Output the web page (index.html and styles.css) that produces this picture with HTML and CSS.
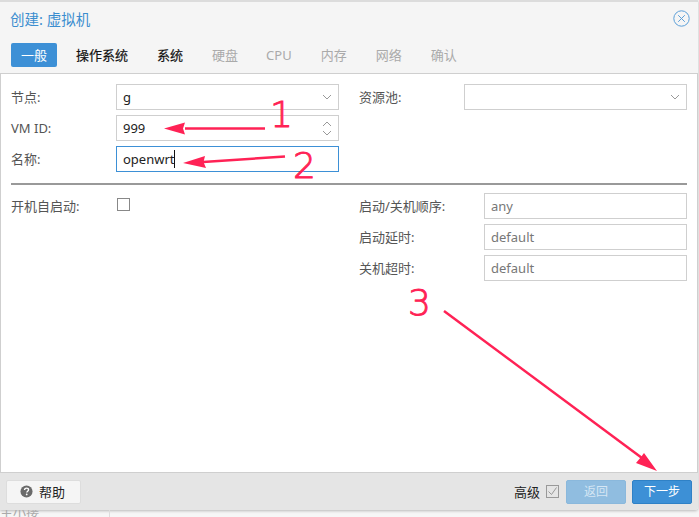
FILE: index.html
```html
<!DOCTYPE html>
<html lang="zh">
<head>
<meta charset="utf-8">
<title>创建: 虚拟机</title>
<link rel="stylesheet" href="styles.css">
</head>
<body>
<div class="window">
  <header class="head">
    <span class="title">创建: 虚拟机</span>
    <svg class="close" viewBox="0 0 17 17" width="17" height="17"><circle cx="8.500" cy="8.500" r="7.700"/><path d="M5.200 5.200l6.600 6.600M11.800 5.200l-6.600 6.600"/></svg>
  </header>
  <nav class="tabs">
    <span class="tab active">一般</span>
    <span class="tab">操作系统</span>
    <span class="tab">系统</span>
    <span class="tab off">硬盘</span>
    <span class="tab off">CPU</span>
    <span class="tab off">内存</span>
    <span class="tab off">网络</span>
    <span class="tab off">确认</span>
  </nav>
  <main class="panel">
    <section class="top">
      <div class="col">
        <div class="row"><label class="lab">节点:</label>
          <div class="field"><span class="val">g</span><svg class="chev" viewBox="0 0 10 6" width="10" height="6"><path d="M1 1l4 4 4-4"/></svg></div></div>
        <div class="row"><label class="lab">VM ID:</label>
          <div class="field"><span class="val">999</span><svg class="spin" viewBox="0 0 10 15" width="10" height="15"><path d="M1 5l4-4 4 4M1 10l4 4 4-4"/></svg></div></div>
        <div class="row"><label class="lab">名称:</label>
          <div class="field focus"><span class="val">openwrt</span><i class="caret"></i></div></div>
      </div>
      <div class="col">
        <div class="row"><label class="lab">资源池:</label>
          <div class="field"><span class="val"></span><svg class="chev" viewBox="0 0 10 6" width="10" height="6"><path d="M1 1l4 4 4-4"/></svg></div></div>
      </div>
    </section>
    <hr class="sep">
    <section class="bottom">
      <div class="col">
        <div class="row"><label class="lab">开机自启动:</label><span class="check"></span></div>
      </div>
      <div class="col">
        <div class="row"><label class="lab lab-l">启动/关机顺序:</label><div class="field"><span class="val ph">any</span></div></div>
        <div class="row"><label class="lab lab-l">启动延时:</label><div class="field"><span class="val ph">default</span></div></div>
        <div class="row"><label class="lab lab-l">关机超时:</label><div class="field"><span class="val ph">default</span></div></div>
      </div>
    </section>
  </main>
  <footer class="foot">
    <button class="btn help"><svg viewBox="0 0 14 14" width="13" height="13"><circle cx="7" cy="7" r="6.500" fill="#6a6a6a"/><path d="M4.900 5.400c0-1.300 1-2 2.200-2s2.100.7 2.100 1.800c0 1.500-1.900 1.500-1.900 2.900" fill="none" stroke="#fff" stroke-width="1.500"/><circle cx="7.200" cy="10.200" r=".95" fill="#fff"/></svg>帮助</button>
    <span class="spacer"></span>
    <span class="adv">高级</span>
    <svg class="advcheck" viewBox="0 0 13 13" width="13" height="13"><rect x=".5" y=".5" width="12" height="12"/><path d="M2.500 6.500l3 3 5-7"/></svg>
    <button class="btn primary dim">返回</button>
    <button class="btn primary">下一步</button>
  </footer>
</div>
<div class="behind"><span>主小接</span><i class="vline"></i></div>
<svg class="marks" viewBox="0 0 699 517" width="699" height="517">
  <path d="M265 128.500L185 128.500" class="line"/>
  <path d="M164 128.500L185 122.500L183 128.500L185 134.500Z" class="fill"/>
  <path d="M285 156.500L203 162" class="line"/>
  <path d="M183 163L205 156L203.500 162L206 168Z" class="fill"/>
  <path d="M444 311L642 458" class="line"/>
  <path d="M657 471L636 463L641 457L644 453Z" class="fill"/>
  <text x="270" y="127" class="num">1</text>
  <text x="293" y="178" class="num">2</text>
  <text x="408" y="315" class="num">3</text>
</svg>
</body>
</html>
```
FILE: styles.css
```css
html, body { margin: 0; padding: 0; }
body {
  width: 699px; height: 517px; overflow: hidden; position: relative;
  background: #f6f6f6;
  font: 13px/18px "Noto Sans", "Noto Sans CJK SC", sans-serif;
  color: #222;
}
.window {
  height: 510px; width: 698px; box-sizing: border-box;
  display: flex; flex-direction: column;
  background: #f5f5f5;
  border-top: 2px solid #dcdcdc;
  box-shadow: 0 1px 3px rgba(0,0,0,.25);
  border-radius: 0 0 3px 0;
}
.head { height: 32px; display: flex; align-items: center; justify-content: space-between; padding: 0 8px 0 10px; flex: none; box-sizing: border-box; }
.title { color: #3b8dcf; font-size: 14.500px; position: relative; top: 1px; }
.close { fill: none; stroke: #5b9fd8; stroke-width: 1; }
.tabs { height: 39px; flex: none; display: flex; align-items: flex-start; padding: 9px 0 0 11px; box-sizing: border-box; }
.tab { height: 24px; line-height: 24px; padding: 0 10px; margin-right: 9px; color: #111; white-space: nowrap; -webkit-text-stroke: .2px #111; }
.tab.active { background: #3d90d6; color: #fff; border-radius: 2px; -webkit-text-stroke: 0; }
.tab.off { color: #aaa; -webkit-text-stroke: 0; }
.tab:nth-child(4) { margin-right: 8px; }
.panel { flex: 1; background: #fff; border: 1px solid #cfcfcf; padding: 10px 10px 0 10px; color: #555; }
.top, .bottom { display: grid; grid-template-columns: 328px 328px; column-gap: 20px; }
.col { display: flex; flex-direction: column; gap: 5px; }
.row { display: flex; align-items: center; height: 26px; }
.lab { width: 105px; flex: none; white-space: nowrap; color: #555; }
.lab-l { width: 125px; }
.field { flex: 1; height: 26px; box-sizing: border-box; border: 1px solid #cfcfcf; display: flex; align-items: center; padding: 0 6px; background: #fff; color: #222; }
.field.focus { border-color: #3d90d6; }
.val { flex: 1; white-space: nowrap; }
.focus .val { flex: none; }
.ph { color: #777; }
.caret { width: 1px; height: 18px; background: #111; margin-left: -1px; }
.chev, .spin { fill: none; stroke: #999; stroke-width: 1; flex: none; }
.sep { border: 0; border-top: 2px solid #999; margin: 11px 0 8px; height: 0; }
.check { width: 13px; height: 13px; box-sizing: border-box; border: 1px solid #888; margin: -4px 0 0 1px; }
.foot { height: 37px; flex: none; background: #e5e5e5; display: flex; align-items: center; padding: 0 6px 0 6px; border-radius: 0 0 3px 0; }
.spacer { flex: 1; }
.btn { height: 24px; box-sizing: border-box; font: inherit; border-radius: 2px; }
.help { width: 75px; background: #f5f5f5; border: 1px solid #ddd; color: #222; display: flex; align-items: center; gap: 6px; padding: 0 0 0 13px; }
.adv { color: #222; margin-right: 6px; }
.advcheck { fill: none; stroke: #999; stroke-width: 1; margin-right: 7px; }
.primary { width: 60px; background: #3d90d6; border: 1px solid #2f81c6; color: #fff; padding: 0; font-size: 12px; }
.dim { background: #90bde0; border-color: #8ab8dc; color: #d5e6f4; margin-right: 6px; }
.behind { height: 7px; overflow: hidden; line-height: 7px; color: #aaa; display: flex; }
.behind span { position: relative; top: -1px; }
.vline { width: 1px; height: 7px; background: #ddd; margin-left: 70px; }
.marks { position: absolute; left: 0; top: 0; pointer-events: none; }
.line { fill: none; stroke: #ff2255; stroke-width: 2.500; }
.fill { fill: #ff2255; }
.num { fill: #ff2255; stroke: #ff2255; stroke-width: .9px; font: 200 36px "DejaVu Sans", sans-serif; }
```
